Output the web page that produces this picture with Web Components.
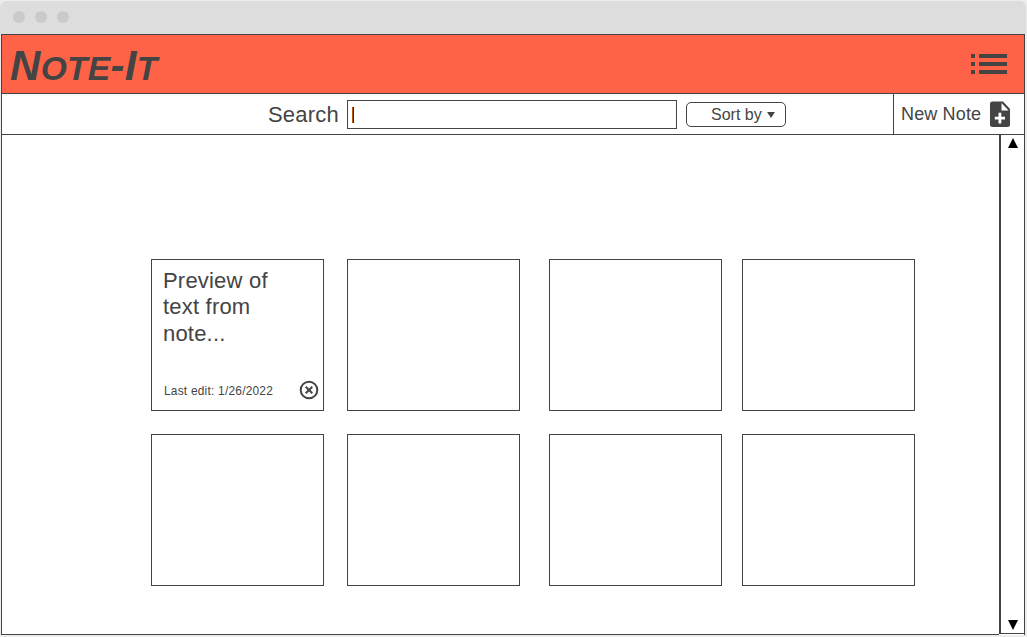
<!DOCTYPE html>
<html lang="en">
<head>
<meta charset="utf-8">
<title>Note-It</title>
<style>
html,body{margin:0;height:100%;background:#ededed;overflow:hidden}
body{font-family:"Liberation Sans",Arial,sans-serif;color:#444}
</style>
</head>
<body>
<app-window>
  <app-header></app-header>
  <note-toolbar></note-toolbar>
  <note-board>
    <note-card edited="Last edit: 1/26/2022">Preview of text from note...</note-card>
    <note-card></note-card><note-card></note-card><note-card></note-card>
    <note-card></note-card><note-card></note-card><note-card></note-card><note-card></note-card>
  </note-board>
</app-window>
<script>
class Base extends HTMLElement{
  constructor(){super();this.attachShadow({mode:'open'}).innerHTML='<style>*{box-sizing:border-box}</style>'+this.view();}
}
customElements.define('app-window',class extends Base{view(){return `
<style>
:host{display:flex;flex-direction:column;width:1026px;height:636px;padding-top:1px;box-sizing:border-box}
.bar{flex:none;height:33px;background:#ddd;border-radius:6px 6px 0 0;display:flex;align-items:center;gap:10px;padding:0 0 1px 13px}
.bar i{width:12px;height:12px;border-radius:50%;background:#cacaca}
.page{margin:0 1px;height:601px;border:1px solid #444;border-bottom:0;display:flex;flex-direction:column}
</style>
<div class="bar"><i></i><i></i><i></i></div>
<div class="page"><slot></slot></div>`}});

customElements.define('app-header',class extends Base{view(){return `
<style>
:host{display:flex;flex:none;box-sizing:border-box;height:59px;background:#ff6347;border-bottom:1px solid #444;justify-content:space-between;align-items:center;padding:0 17px 0 8px}
h1{margin:6px 0 0;font-size:42px;line-height:50px;font-weight:bold;font-style:italic;white-space:nowrap;letter-spacing:.3px}
small{font-size:33.600px;text-transform:uppercase}
svg{display:block}
</style>
<h1>N<small>ote</small>-I<small>t</small></h1>
<svg width="36" height="20" fill="#444" shape-rendering="crispEdges"><path d="M0 0h4v4H0zM8 0h28v4H8zM0 8h4v4H0zM8 8h28v4H8zM0 16h4v4H0zM8 16h28v4H8z"/></svg>`}});

customElements.define('note-toolbar',class extends Base{view(){return `
<style>
:host{display:flex;flex:none;box-sizing:border-box;height:41px;background:#fff;border-bottom:1px solid #444;align-items:center;padding-left:266px}
label{font-size:22px;letter-spacing:.2px;line-height:26px;width:79px;padding-top:2px}
.field{width:330px;height:29px;border:1px solid #444;padding:2px 0 0 4px;display:flex;align-items:center}
.field i{width:2px;height:16px;background:linear-gradient(90deg,#b35900 50%,#1a2c4a 50%)}
.sort{margin-left:9px;width:100px;height:25px;border:1px solid #444;border-radius:5px;font-size:16px;line-height:23px;display:flex;align-items:center;padding-left:24px;gap:5px}
.sort svg{margin-top:1px}
.new{margin-left:auto;height:40px;width:131px;border-left:1px solid #444;display:flex;align-items:center;padding-left:7px;font-size:18px;letter-spacing:.15px}
.new span{width:89px}
svg{display:block}
</style>
<label>Search</label><div class="field"><i></i></div>
<div class="sort"><span>Sort by</span><svg width="8" height="6" fill="#444"><path d="M0 0h8L4 6z"/></svg></div>
<div class="new"><span>New Note</span><svg width="20" height="26" viewBox="0 0 20 26" fill="#444"><path fill-rule="evenodd" d="M2.500 .5H13l7 7.500v15.500a2.500 2.500 0 0 1-2.500 2.500h-15A2.500 2.500 0 0 1 0 23.500v-20.500A2.500 2.500 0 0 1 2.500 .5zM11.500 2v7.500H18.500zM8.500 11.800v4H4.800v2.800h3.700v4h2.800v-4H15v-2.800h-3.700v-4z"/></svg></div>`}});

customElements.define('note-board',class extends Base{view(){return `
<style>
:host{display:flex;flex:none;height:500px;background:#fff}
.main{width:997px;height:500px;border-bottom:1px solid #444;display:grid;grid-template-columns:196px 202px 193px 173px;grid-template-rows:152px 152px;row-gap:23px;padding:124px 0 0 149px}
.scroll{width:25px;height:499px;border-left:2px solid #444;border-bottom:1px solid #444;display:flex;flex-direction:column;justify-content:space-between;align-items:center;padding:3px 0 3px 1px}
svg{display:block}
</style>
<div class="main"><slot></slot></div>
<div class="scroll"><svg width="10" height="10"><path d="M5 0l5 10H0z"/></svg><svg width="10" height="10"><path d="M0 0h10L5 10z"/></svg></div>`}});

customElements.define('note-card',class extends Base{
view(){return `
<style>
:host{display:flex;flex-direction:column;justify-content:space-between;box-sizing:border-box;width:173px;height:152px;border:1px solid #444;background:#fff;padding:8px 4px 10px 11px}
p{margin:0;width:130px;font-size:22px;letter-spacing:.2px;line-height:26.400px}
footer{display:none}
:host([edited]) footer{display:flex;justify-content:space-between;align-items:center;height:20px;padding-left:1px;font-size:11.900px;letter-spacing:.23px}
span{padding-top:2px;line-height:14px}
svg{display:block}
</style>
<p><slot></slot></p>
<footer><span></span><svg width="20" height="20" fill="none" stroke="#444" stroke-width="2"><circle cx="10" cy="10" r="8.300"/><path d="M6.700 6.700l6.600 6.600M13.300 6.700l-6.600 6.600"/></svg></footer>`}
connectedCallback(){this.shadowRoot.querySelector('span').textContent=this.getAttribute('edited')||'';}
});
</script>
</body>
</html>
